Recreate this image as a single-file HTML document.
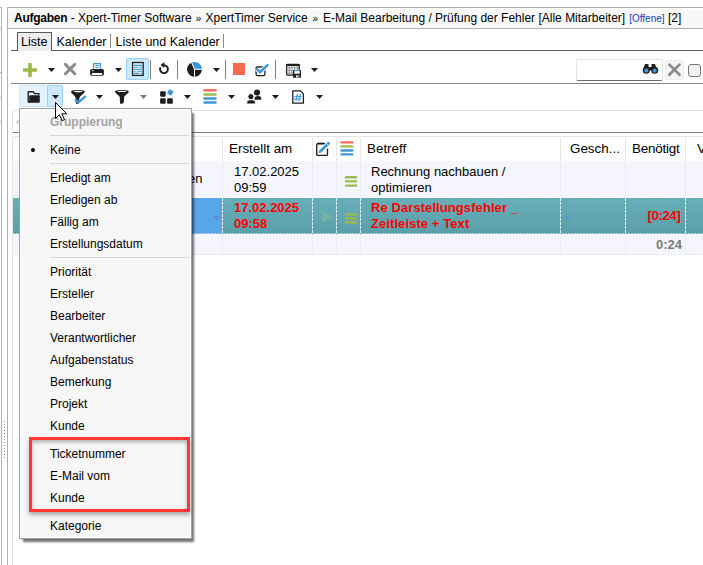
<!DOCTYPE html>
<html><head><meta charset="utf-8">
<style>
*{box-sizing:border-box;margin:0;padding:0}
html,body{width:703px;height:565px;overflow:hidden;background:#fff;font-family:"Liberation Sans",sans-serif;color:#000}
.a{position:absolute}
.t{position:absolute;white-space:nowrap;line-height:1}
.arr{position:absolute;width:0;height:0;border-left:3.5px solid transparent;border-right:3.5px solid transparent;border-top:4px solid #1e1e1e}
.vsep{position:absolute;width:1px;background:#808080}
.hsep{position:absolute;height:1px;background:#d9d9d9}
.mi{position:absolute;left:50px;font-size:12px;line-height:1;white-space:nowrap;color:#000}
.msep{position:absolute;left:50px;width:139px;height:1px;background:#d7d7d7}
</style></head><body>

<!-- left neighbor panel -->
<div class="a" style="left:1px;top:7px;width:1px;height:558px;background:#b4b4b4"></div>
<div class="a" style="left:0;top:7px;width:2px;height:1px;background:#b4b4b4"></div>
<div class="a" style="left:0;top:28px;width:2px;height:1px;background:#b4b4b4"></div>
<div class="a" style="left:0;top:72px;width:2px;height:1px;background:#b4b4b4"></div>
<div class="a" style="left:0;top:97px;width:2px;height:1px;background:#b4b4b4"></div>
<div class="a" style="left:0;top:121px;width:2px;height:1px;background:#b4b4b4"></div>

<!-- main panel -->
<div class="a" style="left:7px;top:7px;width:700px;height:560px;border-left:1px solid #b0b0b0;border-top:1px solid #a8a8a8"></div>
<div class="a" style="left:8px;top:8px;width:700px;height:21px;background:#f8f8f8;border-top:1px solid #fff;border-bottom:1px solid #b0b0b0"></div>
<div class="t" style="left:14px;top:12px;font-size:12px"><b style="letter-spacing:-0.25px">Aufgaben</b> - Xpert-Timer Software <span style="font-size:10px;margin-left:0.85px;margin-right:0.85px">»</span> XpertTimer Service <span style="font-size:10px;margin-left:1.5px;margin-right:1.5px">»</span> E-Mail Bearbeitung / Prüfung der Fehler [Alle Mitarbeiter] <span style="font-size:10px;color:#2038c0;margin-left:0.7px">[Offene]</span> [2]</div>

<!-- tabs -->
<div class="a" style="left:11px;top:50px;width:700px;height:1px;background:#5a5a5a"></div>
<div class="a" style="left:17px;top:32px;width:35px;height:19px;background:#ededed;border:1px solid #5a5a5a;border-bottom:none"></div>
<div class="t" style="left:21px;top:36px;font-size:12.5px">Liste</div>
<div class="t" style="left:56.5px;top:36px;font-size:12.5px">Kalender</div>
<div class="a" style="left:110px;top:34px;width:1px;height:14px;background:#8a8a8a"></div>
<div class="t" style="left:115.5px;top:36px;font-size:12.5px">Liste und Kalender</div>
<div class="a" style="left:223px;top:34px;width:1px;height:14px;background:#8a8a8a"></div>

<!-- toolbar 1 -->
<div class="a" style="left:126px;top:58px;width:23px;height:22px;background:#cce8ff;border:1px solid #99d1ff;border-radius:2px"></div>
<div class="vsep" style="left:150px;top:60px;height:19px"></div>
<div class="vsep" style="left:177px;top:60px;height:19px"></div>
<div class="vsep" style="left:225px;top:60px;height:19px"></div>
<div class="vsep" style="left:275px;top:60px;height:19px"></div>

<!-- search -->
<div class="a" style="left:576px;top:59px;width:87px;height:22px;background:#fff;border:1px solid #e2e2e2;border-bottom:1px solid #6e6e6e;border-radius:2px"></div>
<div class="a" style="left:665px;top:60px;width:19px;height:20px;background:#f5f5f5;border:1px solid #ececec;border-radius:3px"></div>
<div class="a" style="left:688px;top:64px;width:13px;height:13px;background:#f2f2f2;border:1px solid #777;border-radius:3px"></div>

<!-- separator between toolbars -->
<div class="a" style="left:11px;top:83px;width:700px;height:1px;background:#828282"></div>

<!-- toolbar 2 -->
<div class="a" style="left:19px;top:85px;width:28px;height:22px;background:#e5f3ff;border:1px solid #cce8ff;border-right:none;border-radius:2px 0 0 2px"></div>
<div class="a" style="left:47px;top:85px;width:16px;height:22px;background:#cce8ff;border:1px solid #99d1ff;border-radius:0 2px 2px 0"></div>

<svg class="a" style="left:0;top:0" width="703" height="120" viewBox="0 0 703 120">
<g fill="#1e1e1e">
<path d="M48 68h7l-3.5 4z"/><path d="M115 68h7l-3.5 4z"/><path d="M213 68h7l-3.5 4z"/><path d="M311 68h7l-3.5 4z"/>
<path d="M52 95h7l-3.5 4z"/><path d="M96 95h7l-3.5 4z"/><path d="M140 95h7l-3.5 4z" fill="#7a7a7a"/><path d="M184 95h7l-3.5 4z"/><path d="M228 95h7l-3.5 4z"/><path d="M272 95h7l-3.5 4z"/><path d="M316 95h7l-3.5 4z"/>
</g>
<!-- plus -->
<path d="M28.2 63h3.6v5.2H37v3.6h-5.2V77h-3.6v-5.2H23v-3.6h5.2z" fill="#9bba4a"/>
<!-- X -->
<path d="M65.4 64.4L74.8 73.8M74.8 64.4L65.4 73.8" stroke="#8a8a8a" stroke-width="3" stroke-linecap="round"/>
<!-- printer -->
<path d="M93.6 68.8V63.6H100.4V68.8z" fill="#fff"/>
<path d="M93.6 68.8V63.6H100.4V68.8" fill="none" stroke="#3d97d8" stroke-width="1.2"/>
<path d="M95.3 65.5h3.5M95.3 67.4h3.5" stroke="#3d97d8" stroke-width="1"/>
<rect x="90.1" y="69.1" width="13.8" height="6.6" rx="1.7" fill="#1e1e1e"/>
<rect x="91.9" y="73" width="10.2" height="1.9" rx="0.4" fill="#fff"/>
<rect x="91.9" y="70.3" width="1.8" height="0.9" fill="#fff"/>
<!-- doc -->
<rect x="132.6" y="62.5" width="10.6" height="12.9" fill="#eaf5ff" stroke="#1e1e1e" stroke-width="1.3"/>
<path d="M134 65.4h8M134 67.3h4M139.5 67.3h2.5M134 69.3h8M134 71.3h1.5M137 71.3h5M134 73.4h5M140.5 73.4h1.5" stroke="#3d97d8" stroke-width="1.1"/>
<!-- refresh -->
<path d="M164 65.3A3.9 3.9 0 1 1 160.6 67.3" fill="none" stroke="#1e1e1e" stroke-width="1.9"/>
<path d="M160.5 64.9L164.4 61.9L164.2 67.9z" fill="#1e1e1e"/>
<!-- pie -->
<path d="M194.5 69.3L201.9 69.3A7.4 7.4 0 1 1 191.55 62.5z" fill="#1e1e1e"/>
<path d="M194.5 69.3L191.55 62.5A7.4 7.4 0 0 1 201.9 69.3z" fill="#3d97d8"/>
<path d="M201.9 69.3H194.5V76.7M194.5 69.3L191.55 62.5" stroke="#fff" stroke-width="1" fill="none"/>
<!-- red square -->
<rect x="233" y="63" width="12" height="12" fill="#f96a55"/>
<!-- checkbox -->
<rect x="256.1" y="67" width="8.8" height="8.6" rx="1.3" fill="none" stroke="#1e1e1e" stroke-width="1.3"/>
<path d="M256.6 68.7L260 72.1L268.3 64.4" fill="none" stroke="#fff" stroke-width="4.2"/>
<path d="M256.6 68.7L260 72.1L268.3 64.4" fill="none" stroke="#3d97d8" stroke-width="2.6"/>
<!-- grid save -->
<rect x="286.6" y="64.5" width="12.6" height="10.6" rx="1" fill="#fff" stroke="#1e1e1e" stroke-width="1.3"/>
<rect x="286" y="63.9" width="13.8" height="2.2" rx="1" fill="#1e1e1e"/>
<path d="M289.2 66v9M291.9 66v9M294.6 66v9M297.2 66v9M286.6 67.9h12.6M286.6 70.5h12.6M286.6 73.1h12.6" stroke="#7a7a7a" stroke-width="0.8"/>
<rect x="293" y="69.9" width="8" height="7.9" rx="0.6" fill="#1e1e1e"/>
<rect x="294.3" y="70.5" width="5.4" height="3.2" fill="#fff"/>
<rect x="294.3" y="70.4" width="5.4" height="0.8" fill="#3d97d8"/>
<rect x="296" y="75.4" width="3.3" height="2" fill="#fff"/>
<rect x="297.6" y="75.8" width="1" height="1.4" fill="#1e1e1e"/>
<!-- binoculars -->
<path d="M645 64h3.5v3h3v-3h3.5l2.3 6.5h-14.6z" fill="#1e1e1e"/>
<circle cx="646.3" cy="70.3" r="3.5" fill="#1e1e1e"/><circle cx="654.7" cy="70.3" r="3.5" fill="#1e1e1e"/>
<circle cx="646.3" cy="70.6" r="2.1" fill="#3d97d8"/><circle cx="654.7" cy="70.6" r="2.1" fill="#3d97d8"/>
<!-- clear X -->
<path d="M669.3 64.6L679.5 74.8M679.5 64.6L669.3 74.8" stroke="#8a8a8a" stroke-width="2.7" stroke-linecap="round"/>
<!-- folder -->
<path d="M28.2 102.3V91.8H33.2L34.6 93.6H38.9V95.3" fill="none" stroke="#1e1e1e" stroke-width="1.4" stroke-linejoin="round"/>
<rect x="29.2" y="95.3" width="10.6" height="7.4" rx="1" fill="#1e1e1e"/>
<path d="M28.2 102.3H30" stroke="#1e1e1e" stroke-width="1.4"/>
<!-- funnel check -->
<path d="M71 91.5C71 89.4 84.8 89.4 84.8 91.5C84.8 93.2 80.3 95.5 79.5 97.8L78.4 103.7H75.9L75.6 97.8C75.2 95.5 71 93.2 71 91.5Z" fill="#1e1e1e"/>
<ellipse cx="78" cy="91.45" rx="4.2" ry="0.7" fill="#fff"/>
<path d="M75.2 99.5L78.4 102.4L85.8 96.1" fill="none" stroke="#3d97d8" stroke-width="2.4"/>
<!-- funnel -->
<path d="M115 91.4C115 89.4 128.8 89.4 128.8 91.4C128.8 93.1 125 95 124.1 97L124 101.5Q123.8 103.7 121.5 103.7H120.1L119.7 97C118.8 95 115 93.1 115 91.4Z" fill="#1e1e1e"/>
<ellipse cx="121.9" cy="91.4" rx="4.3" ry="0.7" fill="#fff"/>
<!-- squares -->
<rect x="160.1" y="91.3" width="5.6" height="5.4" rx="1.1" fill="#1e1e1e"/>
<rect x="160.1" y="98.3" width="5.6" height="5.5" rx="1.1" fill="#1e1e1e"/>
<rect x="167.1" y="98.3" width="5.7" height="5.5" rx="1.1" fill="#1e1e1e"/>
<rect x="167.8" y="89.9" width="5" height="5" rx="0.8" fill="#3d97d8" transform="rotate(28 170.3 92.4)"/>
<!-- color bars -->
<path d="M204.5 90.3h11" stroke="#f96f5d" stroke-width="2.5" stroke-linecap="round"/>
<path d="M204.5 94.5h11" stroke="#9cbb50" stroke-width="2.5" stroke-linecap="round"/>
<path d="M204.5 98.4h11M204.5 102.5h11" stroke="#3d97d8" stroke-width="2.5" stroke-linecap="round"/>
<!-- people -->
<circle cx="257" cy="92.5" r="3.1" fill="#1e1e1e"/>
<path d="M254.6 99.8V98Q254.9 95.9 258 95.9Q261.1 95.9 261.2 98V99.8z" fill="#1e1e1e"/>
<circle cx="250.9" cy="96.7" r="3.1" fill="#1e1e1e" stroke="#fff" stroke-width="1"/>
<path d="M246.8 103.9V102Q247 99.7 251 99.7Q255.2 99.7 255.3 102V103.9z" fill="#1e1e1e" stroke="#fff" stroke-width="0.8"/>
<!-- doc # -->
<path d="M292.8 90.8H300.3L303.4 93.9V103.2H292.8Z" fill="#fff" stroke="#1e1e1e" stroke-width="1.3" stroke-linejoin="round"/>
<path d="M297.4 94.2L295.9 101M300.5 94.2L299 101M294.5 96.5H301.6M294.1 99H301.2" stroke="#3d97d8" stroke-width="1.2"/>
</svg>

<!-- grouping box row -->
<div class="a" style="left:12px;top:110px;width:700px;height:23px;border:1px solid #e3e3e3;border-bottom:1px solid #808080;border-radius:3px 0 0 0;background:#fff"></div>

<!-- table -->
<div class="a" style="left:12px;top:136px;width:700px;height:430px;border-left:1px solid #e3e3e3;border-top:1px solid #e3e3e3;border-radius:3px 0 0 0"></div>
<div class="a" style="left:222px;top:138px;width:1px;height:23px;background:#e6e6e6"></div>
<div class="a" style="left:312px;top:138px;width:1px;height:23px;background:#e6e6e6"></div>
<div class="a" style="left:336px;top:138px;width:1px;height:23px;background:#e6e6e6"></div>
<div class="a" style="left:360px;top:138px;width:1px;height:23px;background:#e6e6e6"></div>
<div class="a" style="left:560px;top:138px;width:1px;height:23px;background:#e6e6e6"></div>
<div class="a" style="left:625px;top:138px;width:1px;height:23px;background:#e6e6e6"></div>
<div class="a" style="left:685px;top:138px;width:1px;height:23px;background:#e6e6e6"></div>
<div class="t" style="left:229px;top:142px;font-size:13.4px">Erstellt am</div>
<div class="t" style="left:367px;top:142px;font-size:13.4px">Betreff</div>
<div class="t" style="left:570px;top:142px;font-size:13.4px">Gesch...</div>
<div class="t" style="left:632px;top:142px;font-size:13.4px;letter-spacing:-0.2px">Benötigt</div>
<div class="t" style="left:697px;top:142px;font-size:13.4px">V</div>

<!-- row 1 -->
<div class="a" style="left:13px;top:161px;width:700px;height:37px;background:#f4f5fd"></div>
<div class="t" style="left:188px;top:172px;font-size:13px">en</div>
<div class="t" style="left:234px;top:164px;font-size:13px;line-height:16px">17.02.2025<br>09:59</div>
<div class="t" style="left:371px;top:164px;font-size:13px;line-height:16px">Rechnung nachbauen /<br>optimieren</div>

<!-- row 2 -->
<div class="a" style="left:13px;top:198px;width:700px;height:36px;background:linear-gradient(#68afb8,#5a9eaa)"></div>
<div class="a" style="left:120px;top:198px;width:102px;height:36px;background:#58a6ea"></div>
<div class="t" style="left:234px;top:200px;font-size:13px;line-height:16px;font-weight:bold;color:#ff0000">17.02.2025<br>09:58</div>
<div class="t" style="left:371px;top:200px;font-size:13px;line-height:16px;font-weight:bold;color:#ff0000;letter-spacing:0.08px">Re Darstellungsfehler _<br>Zeitleiste + Text</div>
<div class="t" style="left:647.5px;top:208.5px;font-size:13.6px;font-weight:bold;color:#ff0000;letter-spacing:-0.6px">[0:24]</div>

<!-- summary row -->
<div class="a" style="left:13px;top:234px;width:700px;height:21px;background:#f4f5fd"></div>
<div class="t" style="left:656px;top:238px;font-size:13px;font-weight:bold;color:#7b7b7b">0:24</div>

<svg class="a" style="left:0;top:130px" width="703" height="140" viewBox="0 130 703 140">
<!-- dotted separators row1 & summary -->
<g stroke="#e2e4ee" stroke-width="1" stroke-dasharray="1 1">
<path d="M222.5 161V198M312.5 161V198M336.5 161V198M360.5 161V198M560.5 161V198M625.5 161V198M685.5 161V198"/>
<path d="M222.5 234V255M312.5 234V255M336.5 234V255M360.5 234V255M560.5 234V255M625.5 234V255M685.5 234V255"/>
<path d="M13 254.5H703"/>
</g>
<g stroke="#ffffff" stroke-width="1" stroke-dasharray="3 1" opacity="0.85">
<path d="M222.5 198V234M312.5 198V234M336.5 198V234M360.5 198V234M560.5 198V234M625.5 198V234M685.5 198V234"/>
</g>
<path d="M13 197.5H703M13 233.5H703" stroke="#fff" stroke-dasharray="2 1" opacity="0.5"/>
<!-- header note pencil -->
<path d="M325.5 143.7H317.6Q316.7 143.7 316.7 144.6V154.5Q316.7 155.4 317.6 155.4H326.6Q327.5 155.4 327.5 154.5V148.5" fill="none" stroke="#1e1e1e" stroke-width="1.3"/>
<path d="M318.4 142.3v2.4M320 142.3v2.4M321.6 142.3v2.4M323.2 142.3v2.4" stroke="#1e1e1e" stroke-width="0.9"/>
<path d="M320.2 151.6L329.4 142.6" stroke="#fff" stroke-width="4.4"/>
<path d="M320.2 151.6L329.4 142.6" stroke="#3d97d8" stroke-width="2.8"/>
<path d="M318.5 153.2L319.2 150.3L321.4 152.4z" fill="#3d97d8"/>
<path d="M326.9 143.9L328.4 145.4" stroke="#fff" stroke-width="0.8"/>
<!-- header bars -->
<path d="M341.5 142.4h10.8" stroke="#f96f5d" stroke-width="2.4" stroke-linecap="round"/>
<path d="M341.5 146.4h10.8" stroke="#9cbb50" stroke-width="2.4" stroke-linecap="round"/>
<path d="M341.5 150.5h10.8M341.5 154.4h10.8" stroke="#3d97d8" stroke-width="2.4" stroke-linecap="round"/>
<!-- row bars -->
<path d="M346 177.3h10.2M346 181.4h10.2M346 185.6h10.2M346 214.4h10.2M346 218.4h10.2M346 222.5h10.2" stroke="#9cbb50" stroke-width="2.4" stroke-linecap="round"/>
<!-- play -->
<path d="M322.1 211L333.3 216.8L322.1 222.5z" fill="#7db69c" opacity="0.75"/>
<!-- blue cell arrow -->
<path d="M213 216h7.4l-3.7 4z" fill="#5d8fcf"/>
<!-- gesch arrow -->
<path d="M563.8 215.8h7.1l-3.55 4z" fill="#6290d0"/>
</svg>

<!-- grouping icon -->
<svg class="a" style="left:14px;top:118px" width="6" height="8" viewBox="14 118 6 8"><path d="M19.5 120L16.5 122L19.5 124" fill="none" stroke="#c8b8a8" stroke-width="1"/></svg>

<!-- splitter grip -->
<div class="a" style="left:4px;top:421px;width:1px;height:1px;background:#8c8c8c"></div><div class="a" style="left:4px;top:424px;width:1px;height:1px;background:#8c8c8c"></div><div class="a" style="left:4px;top:427px;width:1px;height:1px;background:#8c8c8c"></div><div class="a" style="left:4px;top:430px;width:1px;height:1px;background:#8c8c8c"></div><div class="a" style="left:4px;top:433px;width:1px;height:1px;background:#8c8c8c"></div><div class="a" style="left:4px;top:436px;width:1px;height:1px;background:#8c8c8c"></div><div class="a" style="left:4px;top:439px;width:1px;height:1px;background:#8c8c8c"></div><div class="a" style="left:4px;top:442px;width:1px;height:1px;background:#8c8c8c"></div><div class="a" style="left:4px;top:445px;width:1px;height:1px;background:#8c8c8c"></div><div class="a" style="left:4px;top:448px;width:1px;height:1px;background:#8c8c8c"></div><div class="a" style="left:4px;top:451px;width:1px;height:1px;background:#8c8c8c"></div><div class="a" style="left:4px;top:454px;width:1px;height:1px;background:#8c8c8c"></div><div class="a" style="left:4px;top:457px;width:1px;height:1px;background:#8c8c8c"></div>
<!-- popup menu -->
<div class="a" style="left:19px;top:108px;width:173px;height:431px;background:#f7f7f7;border:1px solid #a0a0a0;box-shadow:inset 0 0 0 1px #fdfdfd, 3px 4px 2px -1px rgba(0,0,0,0.55)"></div>
<div class="mi" style="top:116px;font-weight:bold;color:#a3a3a3">Gruppierung</div>
<div class="msep" style="top:135px"></div>
<div class="a" style="left:31px;top:148px;width:4px;height:4px;border-radius:50%;background:#000"></div>
<div class="mi" style="top:144px">Keine</div>
<div class="msep" style="top:163px"></div>
<div class="mi" style="top:172px">Erledigt am</div>
<div class="mi" style="top:194px">Erledigen ab</div>
<div class="mi" style="top:216px">Fällig am</div>
<div class="mi" style="top:238px">Erstellungsdatum</div>
<div class="msep" style="top:257px"></div>
<div class="mi" style="top:266px">Priorität</div>
<div class="mi" style="top:288px">Ersteller</div>
<div class="mi" style="top:310px">Bearbeiter</div>
<div class="mi" style="top:332px">Verantwortlicher</div>
<div class="mi" style="top:354px">Aufgabenstatus</div>
<div class="mi" style="top:376px">Bemerkung</div>
<div class="mi" style="top:398px">Projekt</div>
<div class="mi" style="top:420px">Kunde</div>
<div class="mi" style="top:448px">Ticketnummer</div>
<div class="mi" style="top:470px">E-Mail vom</div>
<div class="mi" style="top:492px">Kunde</div>
<div class="mi" style="top:520px">Kategorie</div>
<!-- red highlight -->
<div class="a" style="left:29px;top:437px;width:161px;height:75px;border:3px solid #ff3636;box-shadow:0 3px 4px rgba(0,0,0,0.3), inset 0 2px 4px rgba(0,0,0,0.3)"></div>

<svg class="a" style="left:50px;top:97px" width="22" height="28" viewBox="50 97 22 28"><path d="M55.5 102.5V118.5L59.3 114.8L62.3 120.6L64.6 119.6L61.8 113.8H66.8Z" fill="#fff" stroke="#000" stroke-width="1" stroke-linejoin="round"/></svg>
</body></html>
